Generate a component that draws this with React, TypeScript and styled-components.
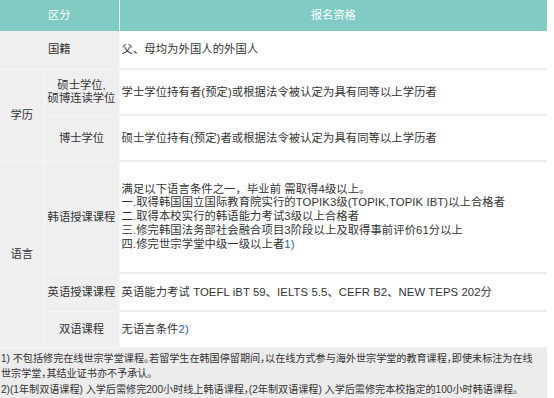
import React from 'react';
import styled, { createGlobalStyle } from 'styled-components';

const GlobalStyle = createGlobalStyle`
  html, body {
    margin: 0;
    padding: 0;
    background: #ffffff;
  }
  body {
    font-family: "Liberation Sans", "Noto Sans CJK SC", sans-serif;
    color: #333333;
  }
`;

const Wrapper = styled.div`
  width: 547px;
`;

const Table = styled.table`
  width: 547px;
  border-collapse: collapse;
  table-layout: fixed;
  font-size: 11.3px;
  line-height: 13px;
`;

const HeaderCell = styled.th<{ $divider?: boolean }>`
  height: 31px;
  padding: 0;
  background: #80cbc4;
  color: #ffffff;
  font-weight: normal;
  text-align: center;
  border-right: ${(p) => (p.$divider ? '1px solid #e6f5f3' : 'none')};
`;

const GroupCell = styled.td`
  padding: 0;
  background: #efefef;
  text-align: center;
  border-bottom: 1px solid #f7f7f7;
  border-right: 1px solid #f7f7f7;
`;

const LabelCell = styled.td`
  padding: 0 2px;
  background: #efefef;
  text-align: center;
  border-bottom: 1px solid #f7f7f7;
  border-right: 1px solid #f8f8f8;
`;

const ContentCell = styled.td`
  padding: 0 2px;
  background: #ffffff;
  text-align: left;
  letter-spacing: 0.1px;
  border-bottom: 2px solid #f2ebed;
`;

const Row = styled.tr<{ $h: number }>`
  height: ${(p) => p.$h}px;
`;

const Note = styled.span`
  color: #2c5fb8;
`;

const Conditions = styled.div`
  line-height: 13.7px;
`;

const Footnotes = styled.div`
  background: #ececec;
  padding: 2px 0 3px 1px;
  font-size: 10.1px;
  line-height: 15.3px;
  color: #333333;
  font-feature-settings: "halt";
`;

const Line = styled.div``;

export default function App() {
  return (
    <>
      <GlobalStyle />
      <Wrapper>
        <Table>
          <colgroup>
            <col style={{ width: 44 }} />
            <col style={{ width: 75 }} />
            <col />
          </colgroup>
          <thead>
            <tr>
              <HeaderCell colSpan={2} $divider>区分</HeaderCell>
              <HeaderCell>报名资格</HeaderCell>
            </tr>
          </thead>
          <tbody>
            <Row $h={38}>
              <LabelCell colSpan={2}>国籍</LabelCell>
              <ContentCell>父、母均为外国人的外国人</ContentCell>
            </Row>
            <Row $h={46}>
              <GroupCell rowSpan={2}>学历</GroupCell>
              <LabelCell>
                硕士学位,
                <br />
                硕博连读学位
              </LabelCell>
              <ContentCell>学士学位持有者(预定)或根据法令被认定为具有同等以上学历者</ContentCell>
            </Row>
            <Row $h={46}>
              <LabelCell>博士学位</LabelCell>
              <ContentCell>硕士学位持有(预定)者或根据法令被认定为具有同等以上学历者</ContentCell>
            </Row>
            <Row $h={112}>
              <GroupCell rowSpan={3}>语言</GroupCell>
              <LabelCell>韩语授课课程</LabelCell>
              <ContentCell>
                <Conditions>
                  <Line>满足以下语言条件之一，毕业前 需取得4级以上。</Line>
                  <Line>一.取得韩国国立国际教育院实行的TOPIK3级(TOPIK,TOPIK IBT)以上合格者</Line>
                  <Line>二.取得本校实行的韩语能力考试3级以上合格者</Line>
                  <Line>三.修完韩国法务部社会融合项目3阶段以上及取得事前评价61分以上</Line>
                  <Line>
                    四.修完世宗学堂中级一级以上者<Note>1)</Note>
                  </Line>
                </Conditions>
              </ContentCell>
            </Row>
            <Row $h={38}>
              <LabelCell>英语授课课程</LabelCell>
              <ContentCell>英语能力考试 TOEFL iBT 59、IELTS 5.5、CEFR B2、NEW TEPS 202分</ContentCell>
            </Row>
            <Row $h={37}>
              <LabelCell>双语课程</LabelCell>
              <ContentCell>
                无语言条件<Note>2)</Note>
              </ContentCell>
            </Row>
          </tbody>
        </Table>
        <Footnotes>
          <Line>
            1) 不包括修完在线世宗学堂课程。若留学生在韩国停留期间，以在线方式参与海外世宗学堂的教育课程，即使未标注为在线
            <br />
            世宗学堂，其结业证书亦不予承认。
          </Line>
          <Line>2)(1年制双语课程) 入学后需修完200小时线上韩语课程，(2年制双语课程) 入学后需修完本校指定的100小时韩语课程。</Line>
        </Footnotes>
      </Wrapper>
    </>
  );
}
